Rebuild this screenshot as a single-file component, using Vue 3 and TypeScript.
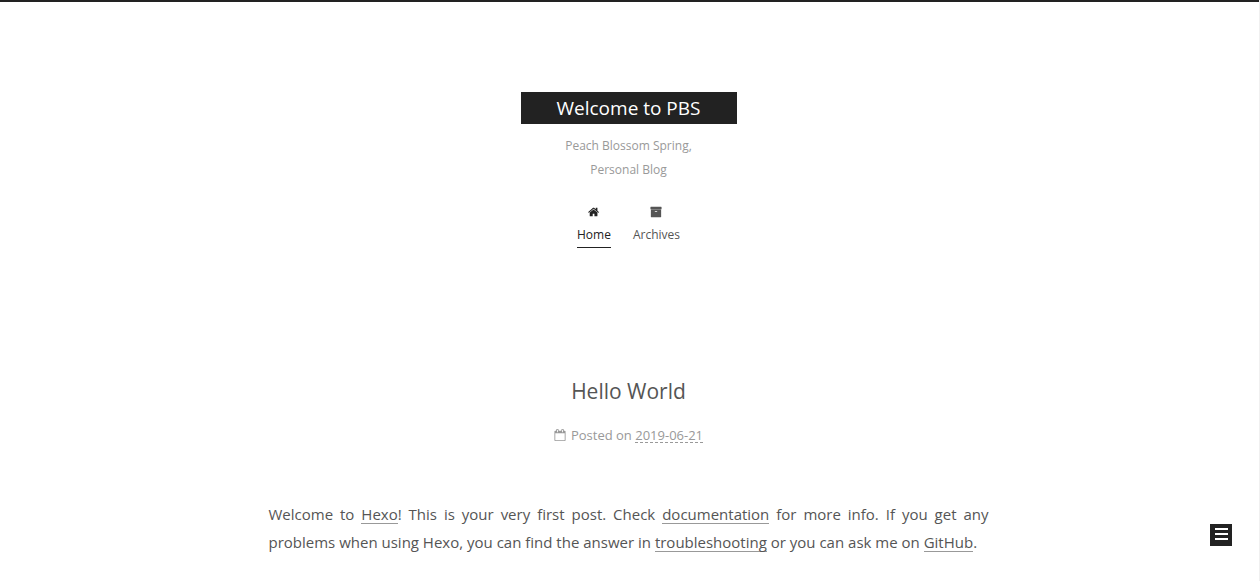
<script setup lang="ts">
interface MenuItem {
  label: string
  href: string
  active: boolean
  icon: string
}

const menu: MenuItem[] = [
  {
    label: 'Home',
    href: '#home',
    active: true,
    icon: 'M1408 992v480q0 26-19 45t-45 19h-384v-384h-256v384h-384q-26 0-45-19t-19-45v-480q0-1 .5-3t.5-3l575-474 575 474q1 2 1 6zm223-69l-62 74q-8 9-21 11h-3q-13 0-21-7l-692-577-692 577q-12 8-24 7-13-2-21-11l-62-74q-8-10-7-23.5t11-21.5l719-599q32-26 76-26t76 26l244 204v-195q0-14 9-23t23-9h192q14 0 23 9t9 23v408l219 182q10 8 11 21.5t-7 23.5z',
  },
  {
    label: 'Archives',
    href: '#archives',
    active: false,
    icon: 'M1088 832q0-26-19-45t-45-19h-256q-26 0-45 19t-19 45 19 45 45 19h256q26 0 45-19t19-45zm576-192v960q0 26-19 45t-45 19h-1408q-26 0-45-19t-19-45v-960q0-26 19-45t45-19h1408q26 0 45 19t19 45zm64-448v256q0 26-19 45t-45 19h-1536q-26 0-45-19t-19-45v-256q0-26 19-45t45-19h1536q26 0 45 19t19 45z',
  },
]
</script>

<template>
  <div class="page">
    <header class="header">
      <a class="brand" href="#home">Welcome to PBS</a>
      <p class="subtitle">Peach Blossom Spring,<br />Personal Blog</p>
      <nav class="menu">
        <a
          v-for="item in menu"
          :key="item.label"
          class="menu-link"
          :class="{ active: item.active }"
          :href="item.href"
        >
          <svg class="menu-icon" viewBox="0 0 1792 1792" aria-hidden="true"><path :d="item.icon" /></svg>
          <span>{{ item.label }}</span>
        </a>
      </nav>
    </header>

    <main class="content">
      <article>
        <h1 class="post-title">Hello World</h1>
        <div class="post-meta">
          <svg class="meta-icon" viewBox="0 0 1792 1792" aria-hidden="true">
            <path d="M192 1664h1408v-1024h-1408v1024zm384-1216v-288q0-14-9-23t-23-9h-64q-14 0-23 9t-9 23v288q0 14 9 23t23 9h64q14 0 23-9t9-23zm768 0v-288q0-14-9-23t-23-9h-64q-14 0-23 9t-9 23v288q0 14 9 23t23 9h64q14 0 23-9t9-23zm384-64v1280q0 52-38 90t-90 38h-1408q-52 0-90-38t-38-90v-1280q0-52 38-90t90-38h128v-96q0-66 47-113t113-47h64q66 0 113 47t47 113v96h384v-96q0-66 47-113t113-47h64q66 0 113 47t47 113v96h128q52 0 90 38t38 90z" />
          </svg>
          <span>Posted on <time datetime="2019-06-21">2019-06-21</time></span>
        </div>
        <p class="post-body">
          Welcome to <a href="#hexo">Hexo</a>! This is your very first post. Check
          <a href="#documentation">documentation</a> for more info. If you get any problems when using
          Hexo, you can find the answer in <a href="#troubleshooting">troubleshooting</a> or you can ask
          me on <a href="#github">GitHub</a>.
        </p>
      </article>
    </main>

    <button class="sidebar-toggle" type="button" aria-label="Toggle sidebar">
      <span class="bar"></span>
      <span class="bar"></span>
      <span class="bar"></span>
    </button>
  </div>
</template>

<style>
body {
  background: #fff;
}
</style>

<style scoped>
.page {
  box-sizing: border-box;
  min-height: 100vh;
  padding: 0 2px 0 0;
  background: linear-gradient(#222, #222) top left / 100% 2px no-repeat #fff;
  border-right: 1px solid #f0f0f0;
  background-clip: padding-box;
  color: #555;
  font-family: 'Open Sans', 'Noto Sans', sans-serif;
  font-size: 13px;
  line-height: 24px;
}

.header {
  display: flex;
  flex-direction: column;
  align-items: center;
  padding-top: 92px;
  font-size: 12px;
}

.brand {
  padding: 0 36px;
  background: #222;
  color: #fff;
  font-size: 19px;
  line-height: 32px;
  text-decoration: none;
}

.subtitle {
  margin: 10px 0 0;
  color: #999;
  text-align: center;
}

.menu {
  display: flex;
  gap: 22px;
  margin-top: 18px;
}

.menu-link {
  display: flex;
  flex-direction: column;
  align-items: center;
  border-bottom: 1px solid transparent;
  color: #555;
  text-decoration: none;
}

.menu-link.active {
  border-bottom-color: #222;
  color: #222;
}

.menu-icon,
.meta-icon {
  width: 12px;
  height: 12px;
  fill: currentColor;
}

.menu-icon {
  margin: 6px 0 5px;
}

.content {
  max-width: 720px;
  margin: 127px auto 0;
}

.post-title {
  margin: 0;
  font-size: 21px;
  font-weight: 400;
  line-height: 32px;
  text-align: center;
}

.post-meta {
  display: flex;
  align-items: center;
  justify-content: center;
  gap: 5px;
  margin-top: 16px;
  color: #999;
}

.post-meta time {
  display: inline-block;
  border-bottom: 1px dashed #999;
  line-height: 14px;
}

.post-body {
  margin: 53px 0 0;
  font-size: 15px;
  line-height: 28px;
  text-align: justify;
}

.post-body a {
  background: linear-gradient(#999, #999) left bottom / 100% 1px no-repeat;
  color: #555;
  text-decoration: none;
}

.sidebar-toggle {
  position: fixed;
  right: 28px;
  bottom: 35px;
  display: flex;
  flex-direction: column;
  align-items: center;
  gap: 3px;
  width: 22px;
  height: 22px;
  padding: 4px 0 0;
  border: 0;
  background: #222;
  cursor: pointer;
}

.bar {
  width: 13px;
  height: 2px;
  background: #fff;
}
</style>
